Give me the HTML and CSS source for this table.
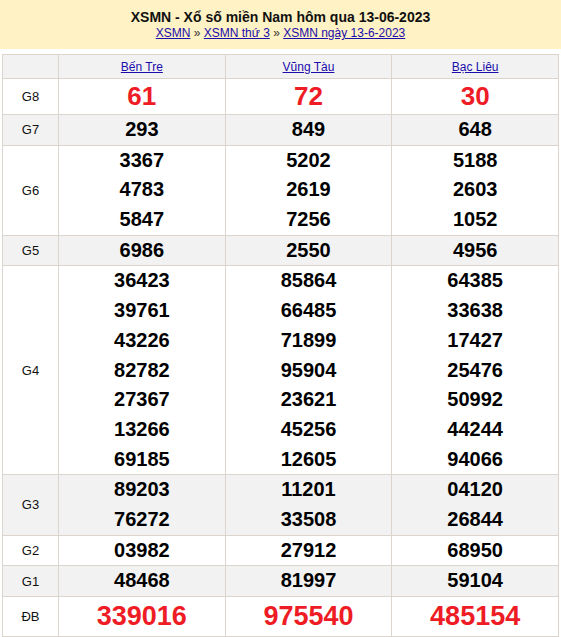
FILE: index.html
```html
<!DOCTYPE html>
<html lang="vi">
<head>
<meta charset="utf-8">
<title>XSMN</title>
<link rel="stylesheet" href="styles.css">
</head>
<body>
<div class="banner">
  <h1 class="title">XSMN - Xổ số miền Nam hôm qua 13-06-2023</h1>
  <div class="crumbs"><a href="#">XSMN</a> » <a href="#">XSMN thứ 3</a> » <a href="#">XSMN ngày 13-6-2023</a></div>
</div>
<table class="results">
  <thead>
    <tr class="alt">
      <th class="label"></th>
      <th><a href="#">Bến Tre</a></th>
      <th><a href="#">Vũng Tàu</a></th>
      <th><a href="#">Bạc Liêu</a></th>
    </tr>
  </thead>
  <tbody>
    <tr class="g8"><td class="label">G8</td><td><div class="big">61</div></td><td><div class="big">72</div></td><td><div class="big">30</div></td></tr>
    <tr class="alt"><td class="label">G7</td><td><div>293</div></td><td><div>849</div></td><td><div>648</div></td></tr>
    <tr><td class="label">G6</td>
      <td><div>3367</div><div>4783</div><div>5847</div></td>
      <td><div>5202</div><div>2619</div><div>7256</div></td>
      <td><div>5188</div><div>2603</div><div>1052</div></td></tr>
    <tr class="alt"><td class="label">G5</td><td><div>6986</div></td><td><div>2550</div></td><td><div>4956</div></td></tr>
    <tr><td class="label">G4</td>
      <td><div>36423</div><div>39761</div><div>43226</div><div>82782</div><div>27367</div><div>13266</div><div>69185</div></td>
      <td><div>85864</div><div>66485</div><div>71899</div><div>95904</div><div>23621</div><div>45256</div><div>12605</div></td>
      <td><div>64385</div><div>33638</div><div>17427</div><div>25476</div><div>50992</div><div>44244</div><div>94066</div></td></tr>
    <tr class="alt"><td class="label">G3</td>
      <td><div>89203</div><div>76272</div></td>
      <td><div>11201</div><div>33508</div></td>
      <td><div>04120</div><div>26844</div></td></tr>
    <tr><td class="label">G2</td><td><div>03982</div></td><td><div>27912</div></td><td><div>68950</div></td></tr>
    <tr class="alt"><td class="label">G1</td><td><div>48468</div></td><td><div>81997</div></td><td><div>59104</div></td></tr>
    <tr class="db"><td class="label">ĐB</td><td><div class="big">339016</div></td><td><div class="big">975540</div></td><td><div class="big">485154</div></td></tr>
  </tbody>
</table>
</body>
</html>
```
FILE: styles.css
```css
html, body {
  margin: 0;
  padding: 0;
  background: #ffffff;
  font-family: "Liberation Sans", Arial, sans-serif;
}
.banner {
  background: #fff2c4;
  height: 49px;
  text-align: center;
  box-sizing: border-box;
  padding-top: 9px;
}
.title {
  margin: 0;
  font-size: 14px;
  line-height: 17px;
  font-weight: bold;
  color: #111;
}
.crumbs {
  font-size: 12px;
  line-height: 15px;
  color: #333;
}
.crumbs a {
  color: #1a0dab;
  text-decoration: underline;
}
.results {
  margin: 5px 0 0 2px;
  width: 557px;
  border-collapse: collapse;
  table-layout: fixed;
}
.results th, .results td {
  border: 1px solid #dbd5ce;
  padding: 0;
  text-align: center;
  vertical-align: middle;
}
.results th {
  height: 23px;
  font-size: 12px;
  font-weight: normal;
}
.results th a {
  color: #1a0dab;
  text-decoration: underline;
}
.results th.label, .results td.label {
  width: 55px;
}
.results td.label {
  font-size: 13px;
  color: #111;
}
.results td div {
  font-size: 20px;
  font-weight: bold;
  line-height: 29.69px;
  color: #000;
}
.results tr.alt th, .results tr.alt td {
  background: #f2f2f2;
}
.results td div.big {
  color: #ee1c25;
  font-size: 26px;
}
.g8 td div.big {
  line-height: 35px;
}
.db td div.big {
  line-height: 39px;
  font-size: 27px;
}
```
